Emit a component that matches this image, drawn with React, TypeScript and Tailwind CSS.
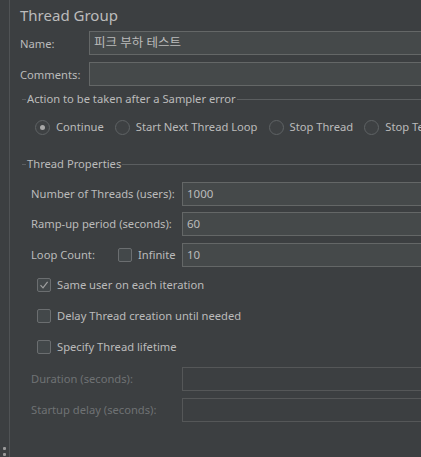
import React from "react";

const font = { fontFamily: '"Noto Sans", "Noto Sans CJK KR", sans-serif' };

function Radio({ checked, label }: { checked?: boolean; label: string }) {
  return (
    <div className="flex items-center shrink-0">
      <div className="w-[15px] h-[15px] rounded-full border border-[#5f6365] bg-[#3e4143] flex items-center justify-center">
        {checked && <div className="w-[5px] h-[5px] rounded-full bg-[#a8a8a8]" />}
      </div>
      <span className="ml-[6px] text-[11.2px] text-[#bbbbbb] whitespace-nowrap">{label}</span>
    </div>
  );
}

function Check({ checked }: { checked?: boolean }) {
  return (
    <div className="w-[14px] h-[14px] rounded-[2px] border border-[#6b6e70] bg-[#43484a] flex items-center justify-center shrink-0">
      {checked && (
        <svg width="10" height="10" viewBox="0 0 10 10">
          <path d="M1.5 5.2 L4 7.8 L8.6 1.8" fill="none" stroke="#a0a0a0" strokeWidth="1.2" />
        </svg>
      )}
    </div>
  );
}

function Field({ value, disabled, big }: { value?: string; disabled?: boolean; big?: boolean }) {
  return (
    <div
      className={
        "h-[24px] flex-1 flex items-center px-[4px] " +
        (big ? "text-[12.5px] " : "text-[11.5px] ") +
        (disabled
          ? "border border-[#555758] bg-[#3c3f41]"
          : "border border-[#646767] bg-[#45494a] text-[#bbbbbb]")
      }
    >
      {value}
    </div>
  );
}

function Legend({ title }: { title: string }) {
  return (
    <div className="flex items-center h-[14px] pl-[2px]">
      <div className="w-[4px] h-px bg-[#5b5e60]" />
      <span className="px-[1px] text-[11.2px] text-[#bbbbbb] whitespace-nowrap leading-[14px]">{title}</span>
      <div className="flex-1 h-px bg-[#5b5e60]" />
    </div>
  );
}

const lab = "text-[11.2px] text-[#bbbbbb] whitespace-nowrap";
const dis = "text-[11.2px] text-[#6f7274] whitespace-nowrap";

export default function App() {
  return (
    <div className="w-[421px] h-[457px] bg-[#3c3f41] overflow-hidden flex" style={font}>
      <div className="w-[9px] h-full relative shrink-0">
        <div className="absolute left-[3px] top-[447px] w-[3px] h-[3px] bg-[#9a9a9a] rounded-[1px]" />
        <div className="absolute left-[3px] top-[453px] w-[3px] h-[3px] bg-[#9a9a9a] rounded-[1px]" />
      </div>
      <div className="w-px h-full bg-[#505355] shrink-0" />
      <div className="w-[470px] shrink-0 pl-[10px] flex flex-col">
        <div className="h-[31px] flex items-center text-[15px] text-[#bbbbbb] pb-[1px]">Thread Group</div>
        <div className="flex items-center h-[24px]">
          <span className={"w-[69px] pt-[2px] " + lab}>Name:</span>
          <Field value="피크 부하 테스트" big />
        </div>
        <div className="flex items-center h-[24px] mt-[7px]">
          <span className={"w-[69px] pt-[2px] " + lab}>Comments:</span>
          <Field />
        </div>
        <div className="mt-[6px]">
          <Legend title="Action to be taken after a Sampler error" />
        </div>
        <div className="flex items-center h-[15px] mt-[14px] pl-[15px] gap-[11px]">
          <Radio checked label="Continue" />
          <Radio label="Start Next Thread Loop" />
          <Radio label="Stop Thread" />
          <Radio label="Stop Test" />
        </div>
        <div className="mt-[22px]">
          <Legend title="Thread Properties" />
        </div>
        <div className="pl-[11px] flex flex-col">
          <div className="flex items-center h-[24px] mt-[11px]">
            <span className={"w-[151px] " + lab}>Number of Threads (users):</span>
            <Field value="1000" />
          </div>
          <div className="flex items-center h-[24px] mt-[6px]">
            <span className={"w-[151px] " + lab}>Ramp-up period (seconds):</span>
            <Field value="60" />
          </div>
          <div className="flex items-center h-[24px] mt-[7px]">
            <span className={"w-[87px] " + lab}>Loop Count:</span>
            <Check />
            <span className={"ml-[6px] w-[44px] " + lab}>Infinite</span>
            <Field value="10" />
          </div>
          <div className="flex flex-col pl-[6px]">
            <div className="flex items-center h-[14px] mt-[11px]">
              <Check checked />
              <span className={"ml-[6px] " + lab}>Same user on each iteration</span>
            </div>
            <div className="flex items-center h-[14px] mt-[17px]">
              <Check />
              <span className={"ml-[6px] " + lab}>Delay Thread creation until needed</span>
            </div>
            <div className="flex items-center h-[14px] mt-[17px]">
              <Check />
              <span className={"ml-[6px] " + lab}>Specify Thread lifetime</span>
            </div>
          </div>
          <div className="flex items-center h-[24px] mt-[13px]">
            <span className={"w-[151px] " + dis}>Duration (seconds):</span>
            <Field disabled />
          </div>
          <div className="flex items-center h-[24px] mt-[7px]">
            <span className={"w-[151px] " + dis}>Startup delay (seconds):</span>
            <Field disabled />
          </div>
        </div>
      </div>
    </div>
  );
}
